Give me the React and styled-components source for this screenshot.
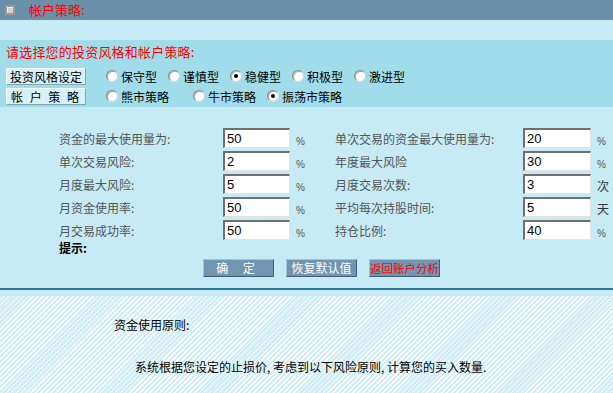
import React from "react";
import styled, { createGlobalStyle } from "styled-components";

const Global = createGlobalStyle`
  html, body { margin: 0; padding: 0; }
  body {
    width: 613px; height: 393px; overflow: hidden;
    background: #c6ebf4;
    font-family: "Noto Sans CJK SC", "Liberation Sans", sans-serif;
    font-size: 12px;
  }
`;

const Page = styled.div`
  display: flex;
  flex-direction: column;
  width: 613px;
  height: 393px;
`;

const Header = styled.div`
  height: 20px;
  flex: none;
  background: #698fa9;
  display: flex;
  align-items: center;
  padding-left: 5px;
  gap: 14px;
`;

const HeaderIcon = styled.span`
  width: 10px;
  height: 10px;
  box-sizing: border-box;
  background: #d4d4d4;
  border: 2px solid #9a9a9a;
  box-shadow: inset 1px 1px 0 #eee;
`;

const HeaderTitle = styled.span`
  color: #ff0000;
  font-size: 13px;
  line-height: 20px;
`;

const Band = styled.div`
  height: 20px;
  flex: none;
  background: #c6ebf4;
`;

const Strategy = styled.div`
  height: 67px;
  flex: none;
  box-sizing: border-box;
  background: #a0dcea;
  padding: 3px 0 0 6px;
  display: flex;
  flex-direction: column;
`;

const Prompt = styled.div`
  color: #ff0000;
  font-size: 13px;
  line-height: 18px;
  letter-spacing: 0.2px;
`;

const OptionRow = styled.div`
  display: flex;
  align-items: center;
  height: 18px;
  margin-top: ${(p) => p.$top}px;
`;

const SideButton = styled.div`
  width: 80px;
  height: 17px;
  flex: none;
  box-sizing: border-box;
  background: #d7f1f7;
  border-top: 1px solid #f4fbfd;
  border-left: 1px solid #f4fbfd;
  border-right: 1px solid #7fa7b6;
  border-bottom: 1px solid #7fa7b6;
  color: #000;
  font-size: 12px;
  line-height: 15px;
  text-align: center;
  white-space: nowrap;
  letter-spacing: ${(p) => p.$spread || 0}px;
  margin-right: 20px;
`;

const Choice = styled.label`
  display: flex;
  align-items: center;
  width: ${(p) => p.$w}px;
  flex: none;
  font-size: 12px;
  white-space: nowrap;
  color: #000;
  gap: 3px;
`;

const Dot = styled.span`
  width: 12px;
  height: 12px;
  box-sizing: border-box;
  border-radius: 50%;
  background: #fff;
  border: 1px solid #8a8a8a;
  border-right-color: #d8d8d8;
  border-bottom-color: #d8d8d8;
  box-shadow: inset 1px 1px 0 #b0b0b0;
  display: flex;
  align-items: center;
  justify-content: center;
  flex: none;
  &::after {
    content: "";
    width: 4px;
    height: 4px;
    border-radius: 50%;
    background: ${(p) => (p.$on ? "#000" : "transparent")};
  }
`;

const Form = styled.div`
  height: 181px;
  flex: none;
  box-sizing: border-box;
  padding: 21px 0 0 59px;
  display: flex;
  flex-direction: column;
`;

const Grid = styled.div`
  display: grid;
  grid-template-columns: 164px 67px 45px 188px 68px 22px;
  grid-auto-rows: 20px;
  row-gap: 3px;
  align-items: center;
`;

const Label = styled.span`
  color: #555;
  font-size: 12px;
  white-space: nowrap;
`;

const Field = styled.input`
  width: 100%;
  height: 20px;
  box-sizing: border-box;
  border-top: 2px solid #6f6f6f;
  border-left: 2px solid #6f6f6f;
  border-right: 1px solid #e2e2e2;
  border-bottom: 1px solid #e2e2e2;
  background: #fff;
  padding: 0 0 0 2px;
  font-family: "Liberation Sans", sans-serif;
  font-size: 13px;
  color: #000;
  outline: none;
`;

const Unit = styled.span`
  padding-left: 6px;
  color: ${(p) => (p.$pct ? "#555" : "#333")};
  font-size: ${(p) => (p.$pct ? 10 : 12)}px;
  padding-top: ${(p) => (p.$pct ? 6 : 2)}px;
  font-family: ${(p) => (p.$pct ? '"Liberation Sans", sans-serif' : "inherit")};
`;

const Hint = styled.div`
  margin-top: 1px;
  font-weight: bold;
  color: #000;
  font-size: 12px;
  line-height: 14px;
`;

const Actions = styled.div`
  display: flex;
  gap: 12px;
  margin: 4px 0 0 144px;
`;

const ActionButton = styled.button`
  width: 71px;
  height: 18px;
  box-sizing: border-box;
  padding: 0;
  background: #7296b1;
  border-top: 1px solid #a8c2d4;
  border-left: 1px solid #a8c2d4;
  border-right: 1px solid #3e5f77;
  border-bottom: 1px solid #3e5f77;
  color: ${(p) => (p.$alert ? "#ff0000" : "#fff")};
  font-family: "Noto Sans CJK SC", sans-serif;
  font-size: ${(p) => (p.$alert ? 11.5 : 12)}px;
  line-height: 16px;
  white-space: nowrap;
  letter-spacing: ${(p) => p.$spread || 0}px;
`;

const Divider = styled.div`
  height: 2px;
  flex: none;
  background: #2a7b99;
`;

const Gap = styled.div`
  height: 6px;
  flex: none;
  background: #c6ebf4;
`;

const Notes = styled.div`
  flex: 1;
  background: repeating-linear-gradient(
    135deg,
    #d2eff7 0px,
    #d2eff7 2.3px,
    #ffffff 2.3px,
    #ffffff 3.5px
  );
  padding: 22px 0 0 114px;
  display: flex;
  flex-direction: column;
`;

const NoteLine = styled.div`
  color: #000;
  font-size: 12px;
  line-height: 14px;
  margin-left: ${(p) => p.$indent || 0}px;
  margin-top: ${(p) => p.$top || 0}px;
`;

const rows = [
  ["资金的最大使用量为:", "50", "%", "单次交易的资金最大使用量为:", "20", "%"],
  ["单次交易风险:", "2", "%", "年度最大风险", "30", "%"],
  ["月度最大风险:", "5", "%", "月度交易次数:", "3", "次"],
  ["月资金使用率:", "50", "%", "平均每次持股时间:", "5", "天"],
  ["月交易成功率:", "50", "%", "持仓比例:", "40", "%"],
];

const styles = [
  ["保守型", false],
  ["谨慎型", false],
  ["稳健型", true],
  ["积极型", false],
  ["激进型", false],
];

const accounts = [
  ["熊市策略", false, 87],
  ["牛市策略", false, 74],
  ["振荡市策略", true, 90],
];

export default function App() {
  return (
    <Page>
      <Global />
      <Header>
        <HeaderIcon />
        <HeaderTitle>帐户策略:</HeaderTitle>
      </Header>
      <Band />
      <Strategy>
        <Prompt>请选择您的投资风格和帐户策略:</Prompt>
        <OptionRow $top={6}>
          <SideButton>投资风格设定</SideButton>
          {styles.map(([t, on]) => (
            <Choice key={t} $w={62}>
              <Dot $on={on} />
              {t}
            </Choice>
          ))}
        </OptionRow>
        <OptionRow $top={2}>
          <SideButton $spread={2}>帐 户 策 略</SideButton>
          {accounts.map(([t, on, w]) => (
            <Choice key={t} $w={w}>
              <Dot $on={on} />
              {t}
            </Choice>
          ))}
        </OptionRow>
      </Strategy>
      <Form>
        <Grid>
          {rows.map((r) => (
            <React.Fragment key={r[0]}>
              <Label>{r[0]}</Label>
              <Field defaultValue={r[1]} />
              <Unit $pct={r[2] === "%"}>{r[2]}</Unit>
              <Label>{r[3]}</Label>
              <Field defaultValue={r[4]} />
              <Unit $pct={r[5] === "%"}>{r[5]}</Unit>
            </React.Fragment>
          ))}
        </Grid>
        <Hint>提示:</Hint>
        <Actions>
          <ActionButton $spread={6}>确 定</ActionButton>
          <ActionButton>恢复默认值</ActionButton>
          <ActionButton $alert>返回账户分析</ActionButton>
        </Actions>
      </Form>
      <Divider />
      <Gap />
      <Notes>
        <NoteLine>资金使用原则:</NoteLine>
        <NoteLine $indent={21} $top={28}>
          系统根据您设定的止损价, 考虑到以下风险原则, 计算您的买入数量.
        </NoteLine>
      </Notes>
    </Page>
  );
}
